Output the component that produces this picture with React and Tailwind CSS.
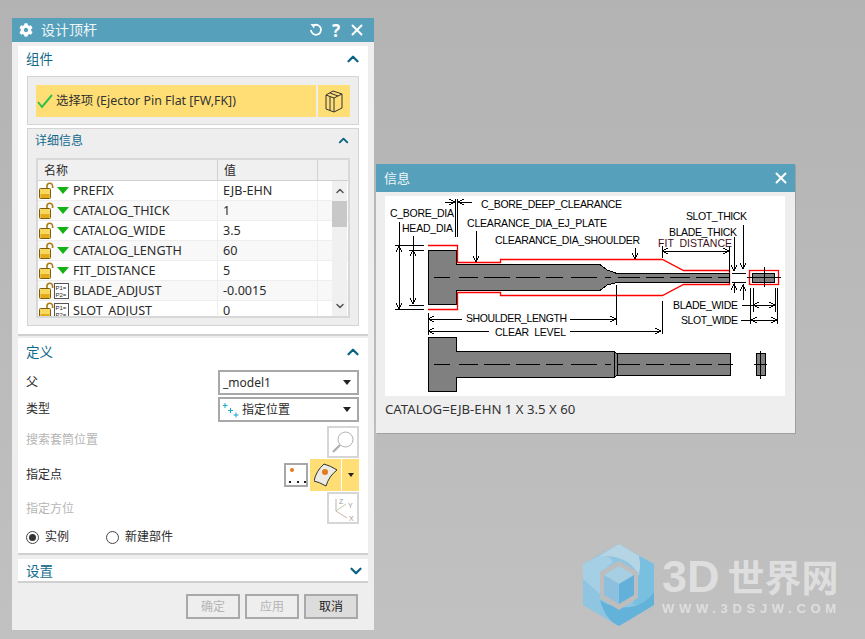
import { X, ChevronUp, ChevronDown } from 'lucide-react';
import { FaCog } from 'react-icons/fa';

const rows = [
  { name: 'PREFIX', value: 'EJB-EHN', kind: 'tri' },
  { name: 'CATALOG_THICK', value: '1', kind: 'tri' },
  { name: 'CATALOG_WIDE', value: '3.5', kind: 'tri' },
  { name: 'CATALOG_LENGTH', value: '60', kind: 'tri' },
  { name: 'FIT_DISTANCE', value: '5', kind: 'tri' },
  { name: 'BLADE_ADJUST', value: '-0.0015', kind: 'p' },
  { name: 'SLOT_ADJUST', value: '0', kind: 'p' },
];

function Lock() {
  return (
    <svg width="15" height="17" viewBox="0 0 15 17" className="shrink-0">
      <path d="M8 7V4a2.8 2.8 0 0 1 5.6 0V6" fill="none" stroke="#a87c10" strokeWidth="1.6" />
      <rect x="0.5" y="6.5" width="11" height="10" rx="1" fill="#f8d85e" stroke="#7a5c10" />
      <rect x="1.5" y="12" width="9" height="4" fill="#e3ab1c" />
    </svg>
  );
}

function Formula() {
  return (
    <svg width="15" height="16" viewBox="0 0 15 16" className="shrink-0">
      <rect x="0.5" y="0.5" width="14" height="15" fill="#fff" stroke="#555" />
      <text x="1.5" y="7" fontSize="6" fontFamily="Liberation Sans" fill="#222">P1=</text>
      <text x="1.5" y="14" fontSize="6" fontFamily="Liberation Sans" fill="#222">P2=</text>
    </svg>
  );
}

function Tri() {
  return (
    <svg width="12" height="7" viewBox="0 0 12 7" className="shrink-0 ml-[3px]">
      <path d="M0 0h12L6 7z" fill="#12b312" />
    </svg>
  );
}

function Caret() {
  return (
    <svg width="8" height="5" viewBox="0 0 8 5">
      <path d="M0 0h8L4 5z" fill="#222" />
    </svg>
  );
}

function Section({ title, open = true }) {
  const Icon = open ? ChevronUp : ChevronDown;
  return (
    <div className="flex items-center justify-between text-[13.5px] text-[#11698c]">
      <span>{title}</span>
      <Icon size={18} strokeWidth={3} className="text-[#0b6283]" />
    </div>
  );
}

function Pick({ children, disabled }) {
  return (
    <div className={`w-8 h-8 border-2 bg-white flex items-center justify-center ${disabled ? 'border-[#d6d6d6]' : 'border-[#a8a8a8]'}`}>
      {children}
    </div>
  );
}

function Button({ children, disabled }) {
  return (
    <div className={`w-[54px] h-[25px] border-2 border-[#a9a9a9] flex items-center justify-center text-xs ${disabled ? 'text-[#b5b5b5] bg-[#eeeeee]' : 'text-[#222] bg-[#dcdcdc]'}`}>
      {children}
    </div>
  );
}

function Arrow({ x, y, dir }) {
  const d = {
    l: `M${x + 6} ${y - 3}L${x} ${y}L${x + 6} ${y + 3}`,
    r: `M${x - 6} ${y - 3}L${x} ${y}L${x - 6} ${y + 3}`,
    u: `M${x - 3} ${y + 6}L${x} ${y}L${x + 3} ${y + 6}`,
    d: `M${x - 3} ${y - 6}L${x} ${y}L${x + 3} ${y - 6}`,
  }[dir];
  return <path d={d} fill="none" stroke="#000" />;
}

const labels = [
  ['C_BORE_DEEP_CLEARANCE', 481, 208, 141],
  ['C_BORE_DIA', 390, 217, 64],
  ['HEAD_DIA', 402, 232, 51],
  ['CLEARANCE_DIA_EJ_PLATE', 467, 227, 140],
  ['CLEARANCE_DIA_SHOULDER', 495, 244, 145],
  ['SLOT_THICK', 686, 220, 61],
  ['BLADE_THICK', 669, 236, 68],
  ['BLADE_WIDE', 673, 309, 65],
  ['SLOT_WIDE', 681, 324, 57],
  ['SHOULDER_LENGTH', 466, 322, 101],
  ['CLEAR  LEVEL', 495, 336, 71],
];

// straight black lines of the pin drawing: x1 y1 x2 y2
const lines = [
  [455.5, 199, 455.5, 237], [457.5, 199, 457.5, 237], [445, 202, 455, 202], [458, 202, 472, 202],
  [399, 222, 399, 309], [395, 245.5, 424, 245.5], [395, 309.5, 424, 309.5],
  [413, 236, 413, 304], [409, 250, 424, 250], [409, 305, 424, 305],
  [476, 231, 476, 262], [635, 248, 635, 259],
  [616.5, 285, 616.5, 325], [662, 301, 662, 334], [428, 313, 428, 335],
  [428, 319, 462, 319], [570, 319, 616, 319], [428, 331, 489, 331], [570, 331, 661, 331],
  [662, 246, 662, 258], [729, 246, 729, 272], [662, 251, 729, 251],
  [743, 225, 743, 269], [734, 237, 734, 271], [732, 273, 746, 273], [732, 282, 746, 282],
  [734, 283, 734, 293], [743, 284, 743, 300],
  [747, 277, 781, 277], [764, 267, 764, 287],
  [750.5, 288, 750.5, 324], [753.5, 288, 753.5, 312], [775.5, 288, 775.5, 312], [777.5, 288, 777.5, 324],
  [742, 305, 775, 305], [741, 320, 777, 320],
];

// centre line dashes, start and end x
const dashes = [
  [434, 450], [459, 478], [484, 510], [516, 540], [546, 563], [571, 597], [605, 611], [618, 640], [646, 664], [670, 690], [696, 712], [718, 729],
];

function PinDrawing() {
  return (
    <svg viewBox="385 196 400 200" width="400" height="200" className="block" shapeRendering="crispEdges">
      <rect x="385" y="196" width="400" height="200" fill="#fff" />
      <path d="M428 245.5H457.5V262.5H500.5V259.5H662.5L683.5 270.5H729.5V284.5H683.5L662.5 295.5H500.5V292.5H457.5V309.5H428" fill="none" stroke="#f00" strokeWidth="1.3" shapeRendering="auto" />
      <path d="M428.5 250.5H456.5V264.5H600L607 270L617 273.5H729.5V282.5H617L607 285L600 290.5H456.5V304.5H428.5Z" fill="#808080" stroke="#000" />
      {dashes.map(([a, b]) => (
        <line key={a} x1={a} y1="277.5" x2={b} y2="277.5" stroke="#000" />
      ))}
      <rect x="752.5" y="273.5" width="22" height="9" fill="#808080" stroke="#000" />
      <rect x="749.5" y="270.5" width="29" height="14" fill="none" stroke="#f00" strokeWidth="1.3" shapeRendering="auto" />
      {lines.map(([a, b, c, d], i) => (
        <line key={i} x1={a} y1={b} x2={c} y2={d} stroke="#000" />
      ))}
      <Arrow x={455} y={202} dir="r" />
      <Arrow x={458} y={202} dir="l" />
      <Arrow x={399} y={246} dir="u" />
      <Arrow x={399} y={309} dir="d" />
      <Arrow x={413} y={250} dir="u" />
      <Arrow x={413} y={304} dir="d" />
      <Arrow x={476} y={262} dir="d" />
      <Arrow x={635} y={259} dir="d" />
      <Arrow x={428} y={319} dir="l" />
      <Arrow x={616} y={319} dir="r" />
      <Arrow x={428} y={331} dir="l" />
      <Arrow x={661} y={331} dir="r" />
      <Arrow x={662} y={251} dir="l" />
      <Arrow x={729} y={251} dir="r" />
      <Arrow x={734} y={271} dir="d" />
      <Arrow x={743} y={269} dir="d" />
      <Arrow x={734} y={284} dir="u" />
      <Arrow x={743} y={285} dir="u" />
      <Arrow x={753} y={305} dir="l" />
      <Arrow x={775} y={305} dir="r" />
      <Arrow x={751} y={320} dir="l" />
      <Arrow x={777} y={320} dir="r" />

      <path d="M428.5 337.5H456.5V351.5H614L617 353.5H730.5V375.5H617L614 377.5H456.5V391.5H428.5Z" fill="#808080" stroke="#000" />
      <line x1="614.5" y1="351" x2="614.5" y2="377" stroke="#000" />
      <line x1="617.5" y1="353" x2="617.5" y2="375" stroke="#000" />
      {dashes.map(([a, b]) => (
        <line key={a} x1={a} y1="364.5" x2={b} y2="364.5" stroke="#000" />
      ))}
      <line x1="729" y1="364.5" x2="733" y2="364.5" stroke="#000" />
      <rect x="756.5" y="353.5" width="9" height="22" fill="#808080" stroke="#000" />
      <line x1="760.5" y1="351" x2="760.5" y2="379" stroke="#000" />
      <line x1="754" y1="364.5" x2="767" y2="364.5" stroke="#000" />

      {labels.map(([t, x, y, w]) => (
        <text key={t} x={x} y={y} fontSize="10.5" fontFamily="Liberation Sans" fill="#000" textLength={w} xmlSpace="preserve">{t}</text>
      ))}
      <text x="658" y="247" fontSize="10.5" fontFamily="Liberation Sans" fill="#3f1020" textLength="74" xmlSpace="preserve">FIT  DISTANCE</text>
    </svg>
  );
}

function Logo() {
  return (
    <svg viewBox="0 0 71 82" width="71" height="82">
      <path d="M36 0L71 20V61L36 82L0 61V20Z" fill="#8fc5e0" />
      <path d="M36 0L56 12C58 20 57 26 56 32C50 18 38 11 16 12Z" fill="#b6d5e4" />
      <path d="M56 12L71 20V48C64 60 58 62 50 60L56 30C57 26 58 20 56 12Z" fill="#78bfe0" />
      <path d="M71 48V61L36 82C26 78 20 68 17 56C30 66 58 68 71 48Z" fill="#63b2da" />
      <path d="M0 61V35L17 56C20 68 26 78 36 82Z" fill="#8fc5e0" />
      <path d="M0 20L16 12C24 11 28 14 30 18L17 30V50L0 35Z" fill="#a4cfe4" />
      <path d="M36 17L55 28V54L36 66L17 54V28Z" fill="#bdbdbd" />
      <path d="M36 22L51 31L36 40L21 31Z" fill="#a6cfe4" />
      <path d="M21 31L36 40V60L21 51Z" fill="#8cc0de" />
      <path d="M51 31L36 40V60L51 51Z" fill="#63b0da" />
    </svg>
  );
}

export default function App() {
  return (
    <div className="relative w-[865px] h-[639px] overflow-hidden bg-gradient-to-b from-[#b3b3b3] to-[#c1c1c1] font-['Noto_Sans','Noto_Sans_CJK_SC',sans-serif] text-xs text-[#2b2b2b]">
      {/* main dialog */}
      <div className="absolute left-3 top-[18px] w-[362px] h-[612px] bg-[#eeeeee] flex flex-col">
        <div className="h-6 bg-[#56a0bb] text-white flex items-center pl-[7px] pr-[8px] shrink-0">
          <FaCog size={14} />
          <span className="ml-[8px] text-[14px] text-[#eef6f9]">设计顶杆</span>
          <svg width="14" height="14" viewBox="0 0 14 14" className="ml-auto">
            <path d="M5 2.2A5 5 0 1 1 2 7" fill="none" stroke="#fff" strokeWidth="1.8" />
            <path d="M1.5 1L6 1.2L5 5.5Z" fill="#fff" />
          </svg>
          <span className="ml-[9px] text-[17px] font-bold leading-none">?</span>
          <X size={18} strokeWidth={2.6} className="ml-[8px]" />
        </div>

        <div className="mx-1.5 mt-1 h-[290px] bg-white border-b-2 border-[#d0d0d0] shrink-0">
          <div className="h-[30px] pl-2 pr-[6px] pt-1">
            <Section title="组件" />
          </div>
          <div className="mx-[9px] h-[49px] bg-[#eeeeee] border border-[#d4d4d4] p-2 flex gap-0.5">
            <div className="w-[280px] h-8 bg-[#ffdf75] flex items-center">
              <svg width="16" height="16" viewBox="0 0 16 16" className="ml-px">
                <path d="M1 9l4 5L15 2" fill="none" stroke="#2fc24a" strokeWidth="2" />
              </svg>
              <span className="ml-[3px] text-[12.4px] text-[#333]">选择项 (Ejector Pin Flat [FW,FK])</span>
            </div>
            <div className="w-8 h-8 bg-[#ffdf75] flex items-center justify-center">
              <svg width="18" height="24" viewBox="0 0 18 24">
                <path d="M1 6L9 9V23L1 20ZM1 6L8 2L17 5L9 9M17 5V19L9 23M5 7.5V21.5M5 4L13 7" fill="#ffdf75" stroke="#333" strokeLinejoin="round" />
              </svg>
            </div>
          </div>
          <div className="mx-[9px] mt-[3px] h-[198px] bg-[#eeeeee] border border-[#d4d4d4]">
            <div className="h-[29px] pl-[7px] pr-[7px] pt-1 flex items-start justify-between text-[#11698c] text-xs">
              <span>详细信息</span>
              <ChevronUp size={15} strokeWidth={3} className="text-[#0b6283]" />
            </div>
            <div className="mx-2 h-[160px] border-2 border-[#d8d8d8] bg-white overflow-hidden relative">
              <div className="h-[21px] flex bg-[#f0f0f0] border-b border-[#d0d0d0]">
                <div className="w-[180px] pl-[6px] border-r border-[#d0d0d0] leading-[21px]">名称</div>
                <div className="w-[100px] pl-[6px] border-r border-[#d0d0d0] leading-[21px]">值</div>
              </div>
              {rows.map((r, i) => (
                <div key={r.name} className={`h-5 flex border-b border-[#eeeeee] text-[12.6px] ${i % 2 ? 'bg-[#f8f8f8]' : 'bg-white'}`}>
                  <div className="w-[180px] flex items-center pl-px border-r border-[#eeeeee] shrink-0">
                    <Lock />
                    {r.kind === 'tri' ? <Tri /> : <Formula />}
                    <span className="ml-[4px] mt-px">{r.name}</span>
                  </div>
                  <div className="w-[100px] pl-[5px] border-r border-[#eeeeee] leading-5 shrink-0">{r.value}</div>
                </div>
              ))}
              <div className="absolute right-px top-[21px] bottom-0 w-[15px] bg-[#f0f0f0] flex flex-col items-center">
                <ChevronUp size={12} strokeWidth={3} className="text-[#555] mt-1" />
                <div className="mt-1 w-full h-[26px] bg-[#c8c8c8]" />
                <ChevronDown size={12} strokeWidth={3} className="text-[#555] mt-auto mb-1" />
              </div>
            </div>
          </div>
        </div>

        <div className="mx-1.5 mt-0.5 h-[217px] bg-white border-b-2 border-[#d0d0d0] shrink-0 pl-2 pr-[9px] flex flex-col">
          <div className="h-[31px] pt-[5px] -mr-[3px]">
            <Section title="定义" />
          </div>
          <div className="h-[27px] flex items-center justify-between">
            <span className="-mt-[2px]">父</span>
            <div className="w-[141px] h-[25px] border-2 border-[#a8a8a8] flex items-center justify-between pl-[3px] pr-[6px]">
              <span className="text-xs">_model1</span>
              <Caret />
            </div>
          </div>
          <div className="h-[27px] flex items-center justify-between">
            <span className="-mt-[2px]">类型</span>
            <div className="w-[141px] h-[25px] border-2 border-[#a8a8a8] flex items-center pl-[3px] pr-[6px]">
              <svg width="16" height="16" viewBox="0 0 16 16" className="mr-[3px]">
                <path d="M2 1v5M-.5 3.5h5M7.5 6v5M5 8.5h5M13 10.5v5M10.5 13h5" stroke="#1aa5cc" />
              </svg>
              <span>指定位置</span>
              <span className="ml-auto"><Caret /></span>
            </div>
          </div>
          <div className="h-[34px] mt-[2px] flex items-center justify-between text-[#b5b5b5]">
            <span className="-mt-[4px]">搜索套筒位置</span>
            <Pick disabled>
              <svg width="24" height="24" viewBox="0 0 24 24">
                <circle cx="14.5" cy="9.5" r="7.5" fill="none" stroke="#b0b0b0" />
                <path d="M9 15L2 22" stroke="#b0b0b0" strokeWidth="2.4" />
              </svg>
            </Pick>
          </div>
          <div className="h-[32px] flex items-center justify-between">
            <span>指定点</span>
            <div className="flex items-center gap-[2px]">
              <div className="w-6 h-6 border-2 border-[#a8a8a8] flex items-center justify-center">
                <svg width="20" height="20" viewBox="0 0 20 20">
                  <rect x="4" y="3" width="4" height="4" rx="2" fill="#e5791f" />
                  <path d="M3 16h2v2H3zM11 16h2v2h-2zM18 16h2v2h-2z" fill="#222" />
                </svg>
              </div>
              <div className="h-8 w-[49px] bg-[#ffdf75] flex items-center">
                <div className="w-[31px] flex justify-center">
                  <svg width="24" height="24" viewBox="0 0 24 24">
                    <path d="M10 1Q17 3 23 7Q15 13 12 23Q5 19 0 18Q2 8 10 1Z" fill="#ecebe4" stroke="#333" />
                    <circle cx="11" cy="9" r="3" fill="#e5791f" />
                  </svg>
                </div>
                <div className="w-px h-full bg-white" />
                <div className="flex-1 flex justify-center"><svg width="6" height="4" viewBox="0 0 6 4"><path d="M0 0h6L3 4z" fill="#222" /></svg></div>
              </div>
            </div>
          </div>
          <div className="h-[34px] flex items-center justify-between text-[#b5b5b5]">
            <span className="mt-[2px]">指定方位</span>
            <Pick disabled>
              <svg width="26" height="26" viewBox="0 0 26 26">
                <path d="M6 4v12" stroke="#b5b5b5" />
                <path d="M6 16L16 9" stroke="#b7cfa6" />
                <path d="M6 16L17 23" stroke="#d9aeb0" />
                <text x="9" y="9" fontSize="7" fontFamily="Liberation Sans" fill="#999">Z</text>
                <text x="18" y="13" fontSize="7" fontFamily="Liberation Sans" fill="#999">Y</text>
                <text x="19" y="26" fontSize="7" fontFamily="Liberation Sans" fill="#999">X</text>
              </svg>
            </Pick>
          </div>
          <div className="h-[22px] mt-px flex items-center">
            <div className="w-[13px] h-[13px] rounded-full border border-[#444] flex items-center justify-center">
              <div className="w-[7px] h-[7px] rounded-full bg-[#333]" />
            </div>
            <span className="ml-[6px]">实例</span>
            <div className="ml-[37px] w-[13px] h-[13px] rounded-full border border-[#444]" />
            <span className="ml-[6px]">新建部件</span>
          </div>
        </div>

        <div className="mx-1.5 mt-1 h-[24px] bg-white border-b-2 border-[#d0d0d0] shrink-0 pl-2 pr-[3px] pt-[3px]">
          <Section title="设置" open={false} />
        </div>

        <div className="mt-[11px] mr-4 flex justify-end gap-[5px]">
          <Button disabled>确定</Button>
          <Button disabled>应用</Button>
          <Button>取消</Button>
        </div>
      </div>

      {/* info window */}
      <div className="absolute left-[376px] top-[164px] w-[419px] h-[269px] bg-[#eeeeee] shadow-[1px_1px_0_#a0a0a0] flex flex-col">
        <div className="h-7 bg-[#56a0bb] flex items-center justify-between pl-2 pr-[5px] text-white shrink-0">
          <span className="text-[13px] text-[#eef6f9] mt-px">信息</span>
          <X size={18} strokeWidth={2.6} />
        </div>
        <div className="ml-[9px] mt-1">
          <PinDrawing />
        </div>
        <div className="ml-[9px] mt-[5px] text-[13.2px] text-[#333]">CATALOG=EJB-EHN 1 X 3.5 X 60</div>
      </div>

      {/* watermark */}
      <div className="absolute left-[583px] top-[544px]">
        <Logo />
      </div>
      <div className="absolute left-[662px] top-[552px] flex flex-col text-[#dedede] font-bold">
        <div className="flex items-center h-[50px] gap-2 whitespace-nowrap">
          <span className="text-[45px] font-['Liberation_Sans',sans-serif]">3D</span>
          <span className="text-[37px] font-['Noto_Sans_CJK_SC',sans-serif]">世界网</span>
        </div>
        <div className="text-[13px] leading-[14px] font-['Liberation_Sans',sans-serif] tracking-[4.7px] whitespace-nowrap">WWW.3DSJW.COM</div>
      </div>
    </div>
  );
}
